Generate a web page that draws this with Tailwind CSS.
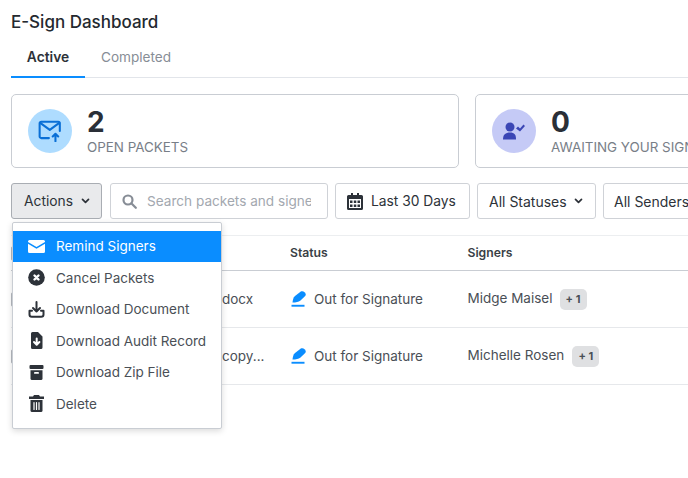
<!DOCTYPE html>
<html lang="en">
<head>
    <meta charset="UTF-8">
    <title>E-Sign Dashboard</title>
    <script src="https://cdn.jsdelivr.net/npm/@tailwindcss/browser@4"></script>
</head>
<body class="bg-white w-[688px] h-[478px] overflow-hidden font-['Inter',sans-serif] text-[#2d3239]">
    <div class="relative px-[11px] w-[688px]">
        <!-- Title -->
        <h1 class="text-[17px] leading-[22px] font-medium pt-[11px] text-[#24292f]">E-Sign Dashboard</h1>

        <!-- Tabs -->
        <div class="flex mt-[11px] w-[677px] border-b border-[#e2e5ea] h-[34px]">
            <div class="w-[74px] h-[34px] border-b-2 border-[#0a8dff] text-center text-[13.800px] font-semibold leading-[26px] text-[#2d3239]">Active</div>
            <div class="pl-[16px] text-[13.600px] leading-[26px] text-[#878d96]">Completed</div>
        </div>

        <!-- Summary cards -->
        <div class="flex gap-[16px] mt-[16px]">
            <div class="w-[448px] h-[74px] shrink-0 border border-[#c9cdd3] rounded-[5px] flex items-center pl-[16px] gap-[15px]">
                <div class="w-[44px] h-[44px] rounded-full bg-[#aedcff] flex items-center justify-center">
                    <svg width="24" height="22" viewBox="0 0 22 20" fill="none" stroke="#0a6fd6" stroke-width="1.900" stroke-linecap="round" stroke-linejoin="round">
                        <path d="M10 16.500H3A1.500 1.500 0 0 1 1.500 15V3A1.500 1.500 0 0 1 3 1.500h15.500A1.500 1.500 0 0 1 20 3V10"/>
                        <path d="M2 2.500l8.800 6.500L19.500 2.500"/>
                        <path d="M16 19.500v-6.500M13.500 15l2.500-2.500 2.500 2.500"/>
                    </svg>
                </div>
                <div class="-mt-[2px]">
                    <div class="text-[28px] leading-[32px] font-bold text-[#2a2f37]">2</div>
                    <div class="text-[13.400px] leading-[16px] text-[#787e87] mt-[1px]">OPEN PACKETS</div>
                </div>
            </div>
            <div class="w-[448px] h-[74px] shrink-0 border border-[#c9cdd3] rounded-[5px] flex items-center pl-[16px] gap-[15px]">
                <div class="w-[44px] h-[44px] rounded-full bg-[#c5caf6] flex items-center justify-center">
                    <svg width="22" height="18" viewBox="0 0 22 18" fill="#3b46b5">
                        <circle cx="7" cy="5" r="4.500"/>
                        <path d="M0 17.500c0-5 2.500-7 7-7s6 2 6 7z"/>
                        <path d="M13 6.500l2-2 2 2 3.500-4 1.500 1.500-5 5.500z"/>
                    </svg>
                </div>
                <div class="-mt-[2px]">
                    <div class="text-[28px] leading-[32px] font-bold text-[#2a2f37]">0</div>
                    <div class="text-[13.400px] leading-[16px] text-[#787e87] mt-[1px] whitespace-nowrap w-[137px] overflow-hidden">AWAITING YOUR SIGNATURE</div>
                </div>
            </div>
        </div>

        <!-- Toolbar -->
        <div class="flex mt-[15px] h-[36px] text-[14px]">
            <div class="w-[91px] h-[36px] shrink-0 bg-[#e9eaec] border border-[#a9adb3] rounded-[3px] flex items-center pl-[12px] gap-[8px] text-[13.800px]">
                <span>Actions</span>
                <svg width="9" height="6" viewBox="0 0 10 7" fill="none" stroke="#2d3239" stroke-width="2" stroke-linecap="round" stroke-linejoin="round"><path d="M1.500 1.500L5 5l3.500-3.500"/></svg>
            </div>
            <div class="ml-[8px] w-[218px] h-[36px] shrink-0 border border-[#cfd2d7] rounded-[3px] flex items-center pl-[11px] gap-[10px] text-[13.600px] text-[#a3a8af] overflow-hidden">
                <svg class="shrink-0" width="15" height="15" viewBox="0 0 15 15" fill="none" stroke="#878d96" stroke-width="2.200" stroke-linecap="round"><circle cx="6" cy="6" r="4.500"/><path d="M9.500 9.500L13.800 13.800"/></svg>
                <span class="whitespace-nowrap w-[164px] overflow-hidden pt-[1px]">Search packets and signers</span>
            </div>
            <div class="ml-[7px] w-[135px] h-[36px] shrink-0 border border-[#cfd2d7] rounded-[3px] flex items-center pl-[11px] gap-[8px] text-[13.800px]">
                <svg width="16" height="17" viewBox="0 0 16 17" fill="#2d3239">
                    <path fill-rule="evenodd" d="M4 0h2v2h4V0h2v2h2.500A1.500 1.500 0 0 1 16 3.500v12a1.500 1.500 0 0 1-1.500 1.500h-13A1.500 1.500 0 0 1 0 15.500v-12A1.500 1.500 0 0 1 1.500 2H4zM2 6v9h12V6z"/>
                    <path d="M3 7.500h2.500V10H3zM6.800 7.500h2.500V10H6.800zM10.500 7.500H13V10h-2.500zM3 11.500h2.500V14H3zM6.800 11.500h2.500V14H6.800zM10.500 11.500H13V14h-2.500z"/>
                </svg>
                <span class="whitespace-nowrap">Last 30 Days</span>
            </div>
            <div class="ml-[7px] w-[119px] h-[36px] shrink-0 border border-[#cfd2d7] rounded-[3px] flex items-center pl-[11px] gap-[7px]">
                <span class="whitespace-nowrap">All Statuses</span>
                <svg width="9" height="6" viewBox="0 0 10 7" fill="none" stroke="#2d3239" stroke-width="2" stroke-linecap="round" stroke-linejoin="round"><path d="M1.500 1.500L5 5l3.500-3.500"/></svg>
            </div>
            <div class="ml-[7px] w-[119px] h-[36px] shrink-0 border border-[#cfd2d7] rounded-[3px] flex items-center pl-[10px] pt-[1px]">
                <span class="whitespace-nowrap">All Senders</span>
            </div>
        </div>

        <!-- Table -->
        <div class="mt-[16px] w-[677px] text-[13.500px] text-[#4a4f56]">
            <div class="h-[36px] flex items-center border-y border-t-[#eceef0] border-b-[#c9cdd3] text-[12.200px] font-semibold text-[#3a3f46]">
                <div class="w-[13px] h-[15px] rounded-[2px] border border-[#b5b9bf] bg-[#f4f5f6] mr-[266px] shrink-0"></div>
                <div class="w-[177.500px]">Status</div>
                <div>Signers</div>
            </div>
            <div class="h-[57px] flex items-center border-b border-[#e6e8eb]">
                <div class="w-[13px] h-[15px] rounded-[2px] border border-[#b5b9bf] bg-[#f4f5f6] mr-[198px] shrink-0"></div>
                <div class="w-[69px]">docx</div>
                <svg class="shrink-0" width="15" height="16" viewBox="0 0 15 16" fill="#0a8dff"><path d="M1.500 11.500C1.800 9 2.200 6.500 4 5L9.500.8C10.800 0 12.500.2 13.800 1.500 15 2.800 15 4 14.200 5L9.500 9.500C7.500 11 5 11.500 1.500 11.500z"/><path d="M.5 13.800h13v1.900H.5z"/></svg>
                <div class="ml-[8px] w-[153.500px] whitespace-nowrap">Out for Signature</div>
                <div class="whitespace-nowrap -mt-[1px]">Midge Maisel</div>
                <div class="ml-[7px] mt-[1px] w-[27px] h-[21px] rounded-[5px] bg-[#dfe0e2] text-[11px] font-bold text-[#4a4f56] text-center leading-[21px]">+ 1</div>
            </div>
            <div class="h-[57px] flex items-center border-b border-[#e6e8eb]">
                <div class="w-[13px] h-[15px] rounded-[2px] border border-[#b5b9bf] bg-[#f4f5f6] mr-[198px] shrink-0"></div>
                <div class="w-[69px]">copy...</div>
                <svg class="shrink-0" width="15" height="16" viewBox="0 0 15 16" fill="#0a8dff"><path d="M1.500 11.500C1.800 9 2.200 6.500 4 5L9.500.8C10.800 0 12.500.2 13.800 1.500 15 2.800 15 4 14.200 5L9.500 9.500C7.500 11 5 11.500 1.500 11.500z"/><path d="M.5 13.800h13v1.900H.5z"/></svg>
                <div class="ml-[8px] w-[153.500px] whitespace-nowrap">Out for Signature</div>
                <div class="whitespace-nowrap -mt-[1px]">Michelle Rosen</div>
                <div class="ml-[8px] mt-[1px] w-[27px] h-[21px] rounded-[5px] bg-[#dfe0e2] text-[11px] font-bold text-[#4a4f56] text-center leading-[21px]">+ 1</div>
            </div>
        </div>

        <!-- Actions dropdown -->
        <div class="absolute left-[12px] top-[222px] w-[210px] h-[207px] bg-white border border-[#c9cdd3] rounded-[2px] shadow-[0_2px_6px_rgba(0,0,0,0.15)] pt-[7.500px] text-[13.500px] text-[#4a4f56]">
            <div class="h-[31.500px] flex items-center pl-[15px] gap-[11px] bg-[#0a8dff] text-white">
                <svg class="shrink-0" width="17" height="13" viewBox="0 0 17 13" fill="#fff"><path d="M1.500 0h14A1.500 1.500 0 0 1 17 1.500v.5L8.500 7 0 2v-.5A1.500 1.500 0 0 1 1.500 0z"/><path d="M0 3.800l8.500 5L17 3.800v7.700a1.500 1.500 0 0 1-1.500 1.500h-14A1.500 1.500 0 0 1 0 11.500z"/></svg>
                <span>Remind Signers</span>
            </div>
            <div class="h-[31.500px] flex items-center pl-[15px] gap-[11px]">
                <svg class="shrink-0" width="17" height="17" viewBox="0 0 17 17"><circle cx="8.500" cy="8.500" r="8.300" fill="#2d3239"/><path d="M6.500 6.500l4 4M10.500 6.500l-4 4" stroke="#fff" stroke-width="2.400" stroke-linecap="round"/></svg>
                <span>Cancel Packets</span>
            </div>
            <div class="h-[31.500px] flex items-center pl-[15px] gap-[11px]">
                <svg class="shrink-0" width="17" height="17" viewBox="0 0 17 17" fill="none" stroke="#2d3239" stroke-width="2" stroke-linecap="round" stroke-linejoin="round"><path d="M8.500 1v9.500M5 7l3.500 3.500L12 7"/><path d="M4 9.800H1.500V13.500A2.300 2.300 0 0 0 3.800 15.800h9.400a2.300 2.300 0 0 0 2.300-2.300V9.800H13"/></svg>
                <span>Download Document</span>
            </div>
            <div class="h-[31.500px] flex items-center pl-[15px] gap-[11px]">
                <svg class="shrink-0" width="17" height="17" viewBox="0 0 17 17"><path d="M4.500 0h5.500l4.500 4.500V15.500A1.500 1.500 0 0 1 13 17H4.500A1.500 1.500 0 0 1 3 15.500V1.500A1.500 1.500 0 0 1 4.500 0z" fill="#2d3239"/><path d="M8.700 6.500v6M6 10l2.700 2.700L11.400 10" fill="none" stroke="#fff" stroke-width="2" stroke-linecap="round" stroke-linejoin="round"/></svg>
                <span>Download Audit Record</span>
            </div>
            <div class="h-[31.500px] flex items-center pl-[15px] gap-[11px]">
                <svg class="shrink-0" width="17" height="15" viewBox="0 0 17 15" fill="#2d3239"><rect x="1.500" y="0" width="14" height="4" rx="1"/><path d="M2.500 5.300h12v8.200a1.500 1.500 0 0 1-1.500 1.500H4a1.500 1.500 0 0 1-1.500-1.500z"/><rect x="6" y="7" width="5" height="1.800" rx=".9" fill="#fff"/></svg>
                <span>Download Zip File</span>
            </div>
            <div class="h-[31.500px] flex items-center pl-[15px] gap-[11px]">
                <svg class="shrink-0" width="17" height="17" viewBox="0 0 17 17" fill="#2d3239"><path d="M6 0h5l1 1.500h4V4H1V1.500h4z"/><path d="M2.500 5h12v10.500a1.500 1.500 0 0 1-1.500 1.500H4a1.500 1.500 0 0 1-1.500-1.500z"/><path d="M6 7.500v7M8.500 7.500v7M11 7.500v7" stroke="#fff" stroke-width="1.200" stroke-linecap="round"/></svg>
                <span>Delete</span>
            </div>
        </div>
    </div>
</body>
</html>
